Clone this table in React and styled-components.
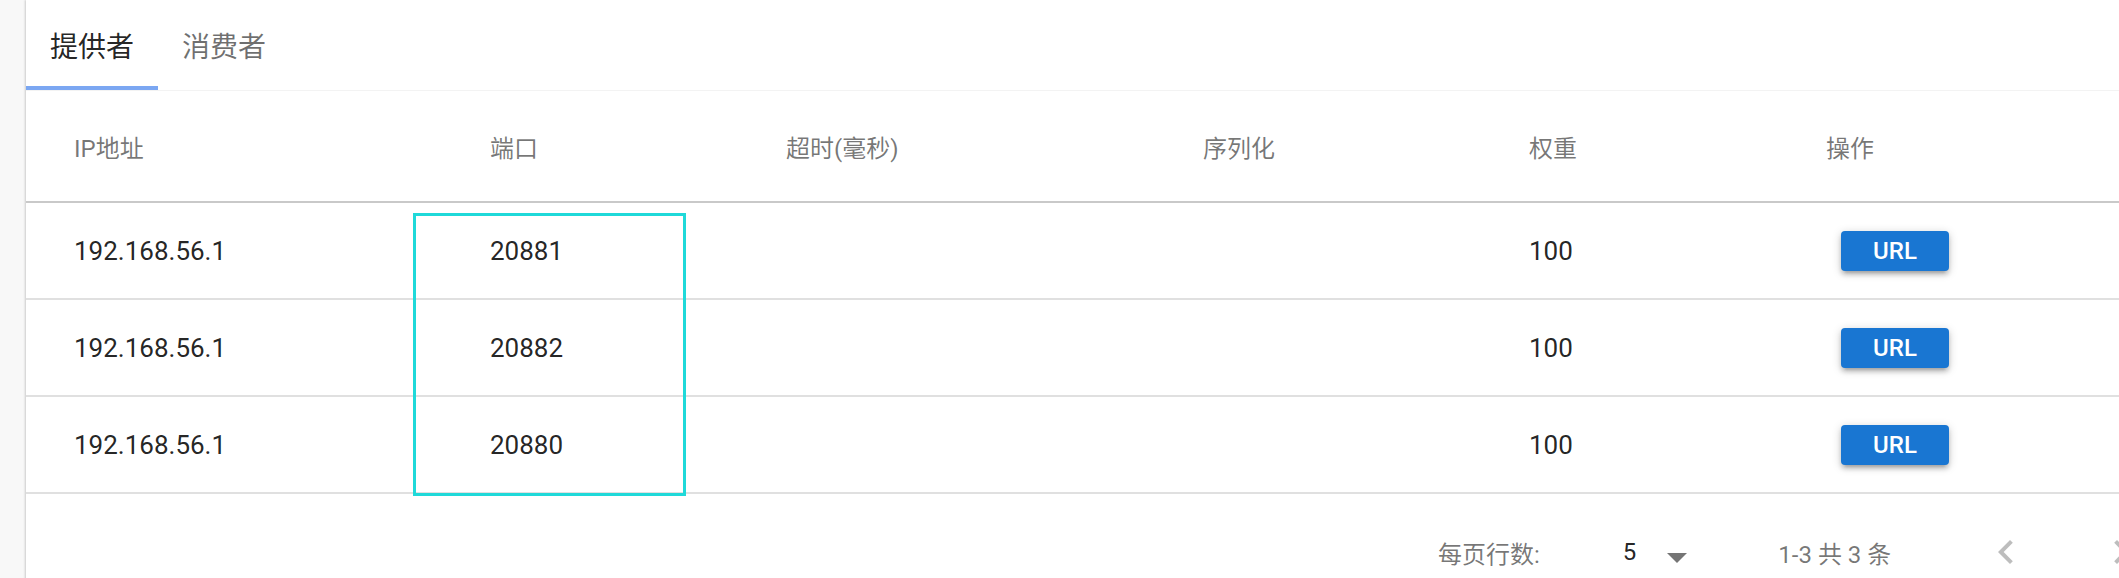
import React from 'react';
import styled, { createGlobalStyle } from 'styled-components';

const GlobalStyle = createGlobalStyle`
  body {
    margin: 0;
    background: #f8f8f8;
    overflow: hidden;
    font-family: Roboto, "Noto Sans CJK SC", sans-serif;
  }
`;

const Page = styled.div`
  padding-left: 26px;
  width: 2300px;
`;

const Paper = styled.div`
  position: relative;
  width: 2200px;
  background: #fff;
  box-shadow: -1px 0 2px rgba(0, 0, 0, 0.18);
`;

const TabBar = styled.div`
  display: flex;
  height: 90px;
  border-bottom: 1px solid #f3f3f3;
`;

const Tab = styled.div`
  position: relative;
  display: flex;
  align-items: center;
  padding: 0 24px;
  font-size: 28px;
  color: ${p => (p.active ? 'rgba(0, 0, 0, 0.87)' : 'rgba(0, 0, 0, 0.56)')};

  &::after {
    content: '';
    display: ${p => (p.active ? 'block' : 'none')};
    position: absolute;
    left: 0;
    right: 0;
    bottom: 0;
    height: 4px;
    background: #7ba7f2;
  }
`;

const Table = styled.table`
  width: 100%;
  table-layout: fixed;
  border-collapse: collapse;
  border-spacing: 0;
`;

const HeadCell = styled.th`
  height: 110px;
  padding: 0 0 0 48px;
  text-align: left;
  font-size: 24px;
  font-weight: 400;
  color: rgba(0, 0, 0, 0.54);
  border-bottom: 2px solid #c9c9c9;
`;

const Cell = styled.td`
  height: 95px;
  padding: 0 0 0 48px;
  font-size: 26px;
  color: rgba(0, 0, 0, 0.87);
  border-bottom: 2px solid #e0e0e0;
`;

const UrlButton = styled.button`
  display: block;
  width: 108px;
  height: 40px;
  margin-left: 15px;
  border: 0;
  border-radius: 4px;
  background: #1976d2;
  color: #fff;
  font-family: Roboto, sans-serif;
  font-size: 24px;
  font-weight: 500;
  box-shadow: 0 2px 10px rgba(0, 0, 0, 0.2), 0 4px 4px rgba(0, 0, 0, 0.14),
    0 6px 2px -4px rgba(0, 0, 0, 0.12);
`;

const Highlight = styled.div`
  position: absolute;
  left: 387px;
  top: 213px;
  width: 273px;
  height: 283px;
  box-sizing: border-box;
  border: 3px solid #1fd9d9;
  pointer-events: none;
`;

const Pagination = styled.div`
  display: flex;
  align-items: center;
  height: 116px;
  padding-left: 1412px;
  font-size: 24px;
  color: rgba(0, 0, 0, 0.54);
`;

const Caption = styled.span`
  white-space: pre;
`;

const Select = styled.div`
  display: flex;
  align-items: center;
  margin-left: 83px;
  color: rgba(0, 0, 0, 0.87);

  svg {
    margin-left: 17px;
    margin-top: 10px;
  }
`;

const Range = styled(Caption)`
  margin-left: 77px;
`;

const Actions = styled.div`
  display: flex;
  margin-left: 91px;
  gap: 67px;
`;

const columns = [
  { title: 'IP地址', width: 416 },
  { title: '端口', width: 296 },
  { title: '超时(毫秒)', width: 417 },
  { title: '序列化', width: 326 },
  { title: '权重', width: 297 },
  { title: '操作' },
];

const rows = [
  { ip: '192.168.56.1', port: '20881', weight: 100 },
  { ip: '192.168.56.1', port: '20882', weight: 100 },
  { ip: '192.168.56.1', port: '20880', weight: 100 },
];

const Chevron = ({ dir }) => (
  <svg width="48" height="48" viewBox="0 0 24 24" fill="rgba(0,0,0,0.26)">
    {dir === 'left' ? (
      <path d="M15.41 7.41L14 6l-6 6 6 6 1.41-1.41L10.83 12z" />
    ) : (
      <path d="M8.59 16.59L13.17 12 8.59 7.41 10 6l6 6-6 6-1.41-1.41z" />
    )}
  </svg>
);

export default function App() {
  return (
    <Page>
      <GlobalStyle />
      <Paper>
        <TabBar>
          <Tab active>提供者</Tab>
          <Tab>消费者</Tab>
        </TabBar>
        <Table>
          <colgroup>
            {columns.map((c, i) => (
              <col key={i} style={c.width ? { width: c.width } : undefined} />
            ))}
          </colgroup>
          <thead>
            <tr>
              {columns.map(c => (
                <HeadCell key={c.title}>{c.title}</HeadCell>
              ))}
            </tr>
          </thead>
          <tbody>
            {rows.map(r => (
              <tr key={r.port}>
                <Cell>{r.ip}</Cell>
                <Cell>{r.port}</Cell>
                <Cell />
                <Cell />
                <Cell>{r.weight}</Cell>
                <Cell>
                  <UrlButton>URL</UrlButton>
                </Cell>
              </tr>
            ))}
          </tbody>
        </Table>
        <Pagination>
          <Caption>每页行数:</Caption>
          <Select>
            5
            <svg width="48" height="48" viewBox="0 0 24 24" fill="rgba(0,0,0,0.54)">
              <path d="M7 10l5 5 5-5z" />
            </svg>
          </Select>
          <Range>1-3 共 3 条</Range>
          <Actions>
            <Chevron dir="left" />
            <Chevron dir="right" />
          </Actions>
        </Pagination>
        <Highlight />
      </Paper>
    </Page>
  );
}
